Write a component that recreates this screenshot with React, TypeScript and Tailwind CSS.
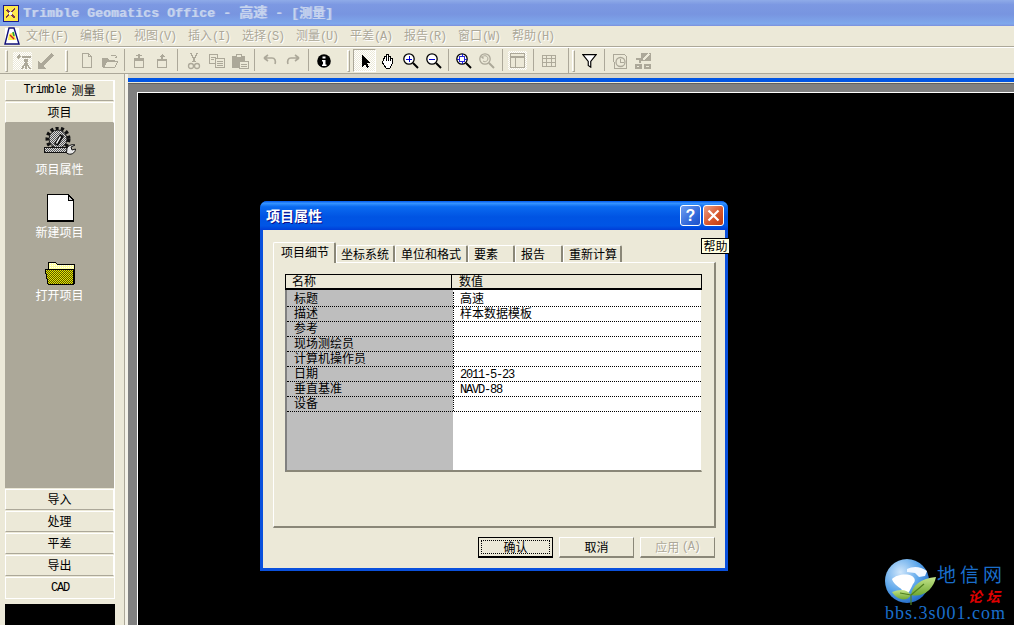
import React from "react";

const cjk = "font-['Noto_Sans_CJK_SC','Noto_Sans',sans-serif]";
const mono = "font-['Liberation_Mono','Noto_Sans_CJK_SC',monospace]";

function L({ children }: { children: React.ReactNode }) {
  return <span className={`${mono} text-[12px] tracking-[-1.2px]`}>{children}</span>;
}

function Btn({ children, active }: { children?: React.ReactNode; active?: boolean }) {
  return (
    <div
      className={`w-[23px] h-[23px] flex items-center justify-center shrink-0 ${
        active
          ? "border border-t-[#aca899] border-l-[#aca899] border-r-white border-b-white bg-[repeating-conic-gradient(#ffffff_0_25%,#ece9d8_0_50%)] bg-[length:2px_2px]"
          : ""
      }`}
    >
      {children}
    </div>
  );
}

function Sep({ w }: { w: string }) {
  return (
    <div className={`${w} h-[23px] flex justify-center shrink-0`}>
      <div className="w-[1px] h-[22px] bg-[#aca899]" />
    </div>
  );
}

function Grip() {
  return <div className="w-[3px] h-[22px] border-l border-t border-white border-r border-r-[#aca899] border-b border-b-[#aca899] shrink-0" />;
}

const G = "#aca899";

function Ico({ children, w = 18, h = 18 }: { children: React.ReactNode; w?: number; h?: number }) {
  return (
    <svg width={w} height={h} viewBox="0 0 18 18" fill="none" shapeRendering="crispEdges">
      {children}
    </svg>
  );
}

function Menu({ t, k }: { t: string; k: string }) {
  return (
    <div className={`w-[54px] shrink-0 text-[12px] text-[#aca899] whitespace-nowrap ${cjk} [text-shadow:1px_1px_0_#ffffff]`}>
      {t}
      <L>({k})</L>
    </div>
  );
}

function SideBtn({ children }: { children: React.ReactNode }) {
  return (
    <div className={`h-[21px] mb-[1px] pb-[1px] flex items-center justify-center border border-white border-b-[#aca899] border-t-white bg-[#ece9d8] text-[12px] text-black ${cjk}`}>
      {children}
    </div>
  );
}

function SideItem({ icon, label, h }: { icon: React.ReactNode; label: string; h: string }) {
  return (
    <div className={`${h} flex flex-col items-center justify-end`}>
      {icon}
      <div className={`text-[12px] leading-[14px] mt-[3px] text-white ${cjk}`}>{label}</div>
    </div>
  );
}

function Tab({ cls, label, active }: { cls: string; label: string; active?: boolean }) {
  return (
    <div
      className={`${cls} ${
        active ? "h-[21px] mb-[-1px] z-10 pb-[3px]" : "h-[17px] pb-[1px]"
      } bg-[#ece9d8] flex items-center text-[12px] text-black border-t border-l border-white border-r-2 border-r-[#8a8778] rounded-t-[2px] ${cjk}`}
    >
      {label}
    </div>
  );
}

const rows: [string, React.ReactNode][] = [
  ["标题", "高速"],
  ["描述", "样本数据模板"],
  ["参考", ""],
  ["现场测绘员", ""],
  ["计算机操作员", ""],
  ["日期", <L key="d">2011-5-23</L>],
  ["垂直基准", <L key="n">NAVD-88</L>],
  ["设备", ""],
];

function Row({ a, b }: { a: string; b: React.ReactNode }) {
  return (
    <div className="h-[15px] flex border-b border-dotted border-black text-[12px] leading-[12px] text-black">
      <div className="w-[166px] pl-[7px] shrink-0 whitespace-nowrap">{a}</div>
      <div className="flex-1 pl-[6px] border-l border-dotted border-black whitespace-nowrap">{b}</div>
    </div>
  );
}

function DlgBtn({ children, kind }: { children: React.ReactNode; kind?: "default" | "disabled" }) {
  if (kind === "default") {
    return (
      <div className="w-[75px] h-[21px] border border-black border-b-2 bg-[#ece9d8] p-[2px]">
        <div className="h-full border border-dotted border-black flex items-center justify-center text-[12px] text-black">
          {children}
        </div>
      </div>
    );
  }
  return (
    <div
      className={`w-[75px] h-[21px] flex items-center justify-center text-[12px] bg-[#ece9d8] border border-white border-r-[#8a8778] border-b-2 border-b-[#8a8778] ${
        kind === "disabled" ? "text-[#aca899] [text-shadow:1px_1px_0_#ffffff]" : "text-black"
      }`}
    >
      {children}
    </div>
  );
}

export default function App() {
  return (
    <div className="relative w-[1014px] h-[625px] overflow-hidden bg-[#ece9d8] flex flex-col">
      {/* App title bar */}
      <div className="h-[26px] shrink-0 flex items-center pl-[3px] bg-[linear-gradient(180deg,#8fabe8_0%,#7c98e2_18%,#7895e0_55%,#7fa8ec_92%,#7c8fdc_100%)]">
        <svg width="16" height="17" viewBox="0 0 16 17" shapeRendering="crispEdges">
          <rect x="0.5" y="0.5" width="15" height="16" fill="#ffe94a" stroke="#1a1a8c" />
          <path d="M3 12L12 4M4 5l8 8" stroke="#7a3a50" strokeWidth="1.5" />
          <rect x="6" y="7" width="3" height="3" fill="#f2f2f2" />
        </svg>
        <div className={`ml-[4px] pb-[2px] ${mono} font-bold text-[13px] tracking-[0.2px] text-[#c6d3ee] whitespace-pre [text-shadow:1px_0_0_#a9bce8]`}>
          Trimble Geomatics Office - <span className={`${cjk} text-[14px] tracking-[0px]`}>高速</span> - [<span className={`${cjk} text-[13px] tracking-[0px]`}>测量</span>]
        </div>
      </div>

      {/* Menu bar */}
      <div className="h-[20px] shrink-0 flex items-center border-b-0">
        <div className="w-[26px] pl-[4px] shrink-0">
          <svg width="16" height="18" viewBox="0 0 16 18">
            <rect x="1" y="1" width="14" height="16" fill="#ffffff" />
            <path d="M1 17L5 1h5l5 16z" fill="#fff" stroke="#10107a" strokeWidth="1.4" />
            <path d="M5 7l5-2 2 8H4z" fill="#ffe94a" />
            <path d="M6 8l4 4" stroke="#d02020" strokeWidth="1.5" />
            <path d="M9 5l1 4" stroke="#20a040" strokeWidth="1.5" />
          </svg>
        </div>
        <Menu t="文件" k="F" />
        <Menu t="编辑" k="E" />
        <Menu t="视图" k="V" />
        <Menu t="插入" k="I" />
        <Menu t="选择" k="S" />
        <Menu t="测量" k="U" />
        <Menu t="平差" k="A" />
        <Menu t="报告" k="R" />
        <Menu t="窗口" k="W" />
        <Menu t="帮助" k="H" />
      </div>
      <div className="h-[1px] shrink-0 bg-[#aca899]" />
      <div className="h-[1px] shrink-0 bg-white" />

      {/* Toolbar */}
      <div className="h-[26px] shrink-0 flex items-center pl-[5px] border-b border-[#aca899]">
        <Grip />
        <div className="w-[3px] shrink-0" />
        <Btn>
          <div className="w-[19px] h-[18px] flex items-center justify-center bg-[repeating-conic-gradient(#ffffff_0_25%,#ece9d8_0_50%)] bg-[length:2px_2px]">
            <Ico>
              <path d="M2 5l4-3 1 3-3 2zM8 4h9v2H8zM10 7h4v3h-4z" fill={G} />
              <path d="M12 10L8 17M12 10v7M12 10l4 7" stroke={G} strokeWidth="1.6" />
            </Ico>
          </div>
        </Btn>
        <Btn>
          <Ico>
            <path d="M1 9v8h8l-3-3L17 4l-3-3L4 12z" fill={G} />
          </Ico>
        </Btn>
        <div className="w-[8px] shrink-0" />
        <Grip />
        <div className="w-[7px] shrink-0" />
        <Btn>
          <Ico>
            <path d="M4.5 1.5h6l3 3v11h-9z" stroke={G} fill="#ece9d8" />
            <path d="M10.5 1.5v3h3" stroke={G} />
          </Ico>
        </Btn>
        <Btn>
          <Ico>
            <path d="M1 15V6h6l1 2h6v7z" fill={G} />
            <path d="M3 15l3-6h11l-3 6z" fill="#ece9d8" stroke={G} />
            <path d="M10 3h4l2 2-2 1" stroke={G} />
          </Ico>
        </Btn>
        <Sep w="w-[6px]" />
        <Btn>
          <Ico>
            <path d="M4.5 6.5h9v9h-9z" stroke={G} />
            <path d="M5 6h8v3H5zM8 2h2v4H8zM6 3h6v1H6z" fill={G} />
          </Ico>
        </Btn>
        <Btn>
          <Ico>
            <path d="M4.5 7.5h9v8h-9z" stroke={G} />
            <path d="M9 2l3 3H6zM8 5h2v3H8zM5 7h8v2H5z" fill={G} />
          </Ico>
        </Btn>
        <Sep w="w-[9px]" />
        <Btn>
          <Ico>
            <path d="M6 1l4 9M12 1L8 10" stroke={G} strokeWidth="1.4" />
            <circle cx="6" cy="14" r="2.5" stroke={G} strokeWidth="1.3" shapeRendering="auto" />
            <circle cx="12" cy="14" r="2.5" stroke={G} strokeWidth="1.3" shapeRendering="auto" />
          </Ico>
        </Btn>
        <Btn>
          <Ico>
            <path d="M1.5 2.5h8v9h-8z" stroke={G} />
            <path d="M7.5 6.5h9v9h-9z" stroke={G} fill="#ece9d8" />
            <path d="M3 5h5M3 7h3M9 9h6M9 11h6M9 13h6" stroke={G} />
          </Ico>
        </Btn>
        <Btn>
          <Ico>
            <path d="M1 4h13v12H1z" fill={G} />
            <path d="M5 2h5v3H5z" fill="#ece9d8" stroke={G} />
            <path d="M8.5 9.5h9v7h-9z" fill="#ece9d8" stroke={G} />
            <path d="M10 12h6M10 14h6" stroke={G} />
          </Ico>
        </Btn>
        <Sep w="w-[7px]" />
        <Btn>
          <Ico>
            <path d="M3 6h8c3 0 4 3 3 6M3 6l4-3M3 6l4 3" stroke={G} strokeWidth="1.6" shapeRendering="auto" />
          </Ico>
        </Btn>
        <Btn>
          <Ico>
            <path d="M15 6H7c-3 0-4 3-3 6M15 6l-4-3M15 6l-4 3" stroke={G} strokeWidth="1.6" shapeRendering="auto" />
          </Ico>
        </Btn>
        <Sep w="w-[8px]" />
        <Btn>
          <svg width="14" height="14" viewBox="0 0 14 14">
            <circle cx="7" cy="7" r="6.8" fill="#000" />
            <path d="M5.5 2.5h3v2h-3zM5 6h3.5v4.5h1V12H5v-1.5h1V7.500H5z" fill="#fff" />
          </svg>
        </Btn>
        <div className="w-[12px] shrink-0" />
        <Grip />
        <div className="w-[3px] shrink-0" />
        <Btn active>
          <Ico>
            <path d="M6 3v12l3-3 2 4 2-1-2-4h4z" fill="#000" />
          </Ico>
        </Btn>
        <Btn>
          <Ico>
            <path d="M4 9V6h1.500v-2h2V2.500h2V4h2v2h1.500v6l-2 4H7L3 10z" fill="#fff" stroke="#000" />
            <path d="M7.500 4v5M9.500 3v6M11.500 5v4" stroke="#000" />
          </Ico>
        </Btn>
        <Btn>
          <Ico>
            <circle cx="7" cy="7" r="5.200" fill="#fff" stroke="#000" strokeWidth="1.300" shapeRendering="auto" />
            <path d="M4 6.500h6v1H4zM6.500 4h1v6h-1z" fill="#0000d0" />
            <path d="M11 11l5 5" stroke="#000" strokeWidth="2" shapeRendering="auto" />
          </Ico>
        </Btn>
        <Btn>
          <Ico>
            <circle cx="7" cy="7" r="5.200" fill="#fff" stroke="#000" strokeWidth="1.300" shapeRendering="auto" />
            <path d="M4 6.500h6v1H4z" fill="#0000d0" />
            <path d="M11 11l5 5" stroke="#000" strokeWidth="2" shapeRendering="auto" />
          </Ico>
        </Btn>
        <Sep w="w-[7px]" />
        <Btn>
          <Ico>
            <circle cx="7" cy="7" r="5.200" fill="#fff" stroke="#000" strokeWidth="1.300" shapeRendering="auto" />
            <path d="M2 6.500h10v1H2zM6.500 2h1v10h-1zM4 4h6v6H4z" fill="#0000d0" opacity="0.85" />
            <path d="M5 5h4v4H5z" fill="#fff" />
            <path d="M11 11l5 5" stroke="#000" strokeWidth="2" shapeRendering="auto" />
          </Ico>
        </Btn>
        <Btn>
          <Ico>
            <circle cx="7" cy="7" r="5.200" fill="#ece9d8" stroke={G} strokeWidth="1.300" shapeRendering="auto" />
            <path d="M4 6a3 3 0 1 1 1 3M4 4v2h2" stroke={G} shapeRendering="auto" />
            <path d="M11 11l5 5" stroke={G} strokeWidth="2" shapeRendering="auto" />
          </Ico>
        </Btn>
        <Sep w="w-[8px]" />
        <Btn>
          <div className="w-[19px] h-[19px] flex items-center justify-center bg-[repeating-conic-gradient(#ffffff_0_25%,#ece9d8_0_50%)] bg-[length:2px_2px]">
            <Ico w={15} h={15}>
              <path d="M1 1h16v16H1z" fill="#ece9d8" stroke={G} strokeWidth="1.500" />
              <path d="M1 5h16" stroke={G} strokeWidth="2" />
              <path d="M7 5v12" stroke={G} strokeWidth="1.500" />
            </Ico>
          </div>
        </Btn>
        <Sep w="w-[8px]" />
        <Btn>
          <Ico w={16} h={16}>
            <path d="M1.500 2.500h15v13h-15zM1.500 6.500h15M1.500 11h15M6.500 2.500v13M11.500 2.500v13" stroke={G} strokeWidth="1.100" />
          </Ico>
        </Btn>
        <div className="w-[8px] shrink-0" />
        <div className="w-[1px] h-[25px] bg-[#aca899] shrink-0" />
        <div className="w-[3px] shrink-0" />
        <Grip />
        <div className="w-[3px] shrink-0" />
        <Btn>
          <Ico w={15} h={15}>
            <path d="M1 2h16l-6.500 8v7l-3-2v-5z" fill="#fff" stroke="#000" strokeWidth="1.400" shapeRendering="auto" />
          </Ico>
        </Btn>
        <Sep w="w-[7px]" />
        <Btn>
          <Ico>
            <path d="M2.500 2.500h11l2 2v12h-12z" fill="#ece9d8" stroke={G} />
            <circle cx="9.500" cy="10" r="4.500" stroke={G} strokeWidth="1.300" shapeRendering="auto" />
            <path d="M9.500 7v3h3" stroke={G} />
          </Ico>
        </Btn>
        <Btn>
          <Ico>
            <path d="M1 12h7v5H1zM10 12h7v5h-7z" fill={G} />
            <path d="M3 14h2v1H3zM12 14h3v1h-3z" fill="#ece9d8" />
            <path d="M7 1h10v8H7z" fill={G} />
            <path d="M9 8l6-6" stroke="#ece9d8" strokeWidth="1.500" />
            <path d="M2 7h4v4" stroke={G} strokeWidth="1.500" />
          </Ico>
        </Btn>
      </div>

      {/* Body */}
      <div className="flex-1 min-h-0 flex">
        {/* Left panel */}
        <div className="w-[124px] shrink-0 pl-[5px] pt-[6px] pr-[9px] flex flex-col">
          <div className="border-r border-b border-white flex flex-col h-[519px]">
            <SideBtn>
              <L>Trimble</L>
              <span className="ml-[6px]">测量</span>
            </SideBtn>
            <SideBtn>项目</SideBtn>
            <div className="flex-1 bg-[#aca899] flex flex-col -mt-[1px]">
              <SideItem
                h="h-[53px]"
                label="项目属性"
                icon={
                  <svg width="33" height="32" viewBox="0 0 33 32">
                    <defs>
                      <pattern id="dg" width="2" height="2" patternUnits="userSpaceOnUse">
                        <rect width="2" height="2" fill="#dcdcdc" />
                        <rect width="1" height="1" fill="#555" />
                        <rect x="1" y="1" width="1" height="1" fill="#555" />
                      </pattern>
                    </defs>
                    <circle cx="15" cy="12" r="10.500" fill="none" stroke="#111" strokeWidth="4" strokeDasharray="3 2.200" />
                    <circle cx="15" cy="12" r="9" fill="url(#dg)" stroke="#222" />
                    <path d="M11 17l6-10 4 2-6 10z" fill="#111" />
                    <path d="M13 16l4-7 1 1-4 7z" fill="#fff" />
                    <rect x="1.500" y="20.500" width="23" height="5" fill="url(#dg)" stroke="#111" />
                    <path d="M24 21c2-3 6-4 8-3l-4 2 1 3 3.500-1c0 4-5 7-9 4z" fill="#e8e8e8" stroke="#111" />
                  </svg>
                }
              />
              <SideItem
                h="h-[63px]"
                label="新建项目"
                icon={
                  <svg width="28" height="29" viewBox="0 0 28 29" shapeRendering="crispEdges">
                    <path d="M1 1h21l5 5v22H1z" fill="#fff" stroke="#000" />
                    <path d="M22 1v6h5z" fill="#c8c8c8" stroke="#000" />
                    <path d="M2 28h26" stroke="#000" strokeWidth="2" />
                  </svg>
                }
              />
              <SideItem
                h="h-[63px]"
                label="打开项目"
                icon={
                  <svg width="32" height="24" viewBox="0 0 32 24" shapeRendering="crispEdges">
                    <defs>
                      <pattern id="y1" width="2" height="2" patternUnits="userSpaceOnUse">
                        <rect width="2" height="2" fill="#e8e800" />
                        <rect width="1" height="1" fill="#555500" />
                        <rect x="1" y="1" width="1" height="1" fill="#555500" />
                      </pattern>
                      <pattern id="y2" width="2" height="2" patternUnits="userSpaceOnUse">
                        <rect width="2" height="2" fill="#ffffa0" />
                        <rect width="1" height="1" fill="#fff" />
                      </pattern>
                    </defs>
                    <path d="M4 4V1h7l2 2h17v19H4z" fill="url(#y2)" stroke="#000" />
                    <path d="M1 8h26l2 0v15H4z" fill="url(#y1)" stroke="#000" />
                  </svg>
                }
              />
              <div className="flex-1" />
            </div>
            <div className="h-[1px]" />
            <SideBtn>导入</SideBtn>
            <SideBtn>处理</SideBtn>
            <SideBtn>平差</SideBtn>
            <SideBtn>导出</SideBtn>
            <div className={`h-[21px] pb-[1px] flex items-center justify-center border-t border-l border-white bg-[#ece9d8] text-black`}>
              <L>CAD</L>
            </div>
          </div>
          <div className="h-[5px] shrink-0" />
          <div className="flex-1 bg-black" />
        </div>

        {/* Splitter */}
        <div className="w-[1px] shrink-0 bg-[#aca899]" />
        <div className="w-[3px] shrink-0 bg-[#f4f2e8]" />

        {/* MDI area */}
        <div className="flex-1 flex flex-col min-w-0">
          <div className="h-[4px] shrink-0 bg-[#d8d5c8]" />
          <div className="h-[4px] shrink-0 bg-[#0054e3]" />
          <div className="h-[1px] shrink-0 bg-[#ece9d8]" />
          <div className="h-[1px] shrink-0 bg-[#606060]" />
          <div className="flex-1 bg-[#808080] pt-[8px] pl-[9px] flex flex-col min-h-0">
            <div className="flex-1 bg-black border-t border-l border-white" />
          </div>
        </div>
      </div>

      {/* Dialog window */}
      <div className={`absolute left-[260px] top-[201px] w-[468px] h-[370px] rounded-t-[7px] overflow-hidden flex flex-col bg-[#0a50dc] ${cjk}`}>
        <div className="h-[29px] shrink-0 flex items-center pl-[6px] pr-[4px] bg-[linear-gradient(180deg,#0058ee_0%,#3593ff_8%,#0a6af0_20%,#0054e3_55%,#0055e5_85%,#003dd7_100%)]">
          <div className="flex-1 text-[14px] font-bold text-white [text-shadow:1px_1px_0_#0f1089]">项目属性</div>
          <div className="w-[21px] h-[21px] rounded-[3px] border border-white flex items-center justify-center bg-[linear-gradient(135deg,#6f9ef0,#2a62d8_70%,#2050c8)] text-white font-bold text-[16px] font-['Liberation_Sans',sans-serif]">
            ?
          </div>
          <div className="w-[21px] h-[21px] ml-[2px] rounded-[3px] border border-white flex items-center justify-center bg-[linear-gradient(135deg,#e8a088,#d8582e_55%,#c03a10)]">
            <svg width="13" height="13" viewBox="0 0 13 13">
              <path d="M1.500 1.500l10 10M11.500 1.500l-10 10" stroke="#fff" strokeWidth="2.200" />
            </svg>
          </div>
        </div>
        <div className="flex-1 mx-[3px] mb-[3px] bg-[#ece9d8] flex flex-col pl-[10px] pr-[9px]">
          <div className="h-[32px] shrink-0 flex items-end">
            <Tab cls="w-[63px] pl-[7px]" label="项目细节" active />
            <Tab cls="w-[59px] pl-[4px]" label="坐标系统" />
            <Tab cls="w-[73px] pl-[5px]" label="单位和格式" />
            <Tab cls="w-[47px] pl-[5px]" label="要素" />
            <Tab cls="w-[48px] pl-[5px]" label="报告" />
            <Tab cls="w-[59px] pl-[5px]" label="重新计算" />
          </div>
          <div className="h-[266px] shrink-0 border-t border-l border-white border-r-2 border-r-[#8a8778] border-b-2 border-b-[#8a8778] pt-[11px] pl-[11px] pr-[12px]">
            <div className="h-[198px] flex flex-col">
              <div className="h-[16px] shrink-0 flex border border-black border-b-2 text-[12px] leading-[12px] text-black bg-[#ece9d8]">
                <div className="w-[166px] pl-[6px] border-r border-black shrink-0">名称</div>
                <div className="pl-[7px]">数值</div>
              </div>
              <div className="flex-1 border-l-2 border-l-[#808080] border-r border-r-[#ece9d8] border-b-2 border-b-[#8a8778] pt-[2px] bg-[linear-gradient(90deg,#bebebe_166px,#ffffff_166px)]">
                {rows.map(([a, b]) => (
                  <Row key={a} a={a} b={b} />
                ))}
              </div>
            </div>
          </div>
          <div className="flex-1 flex justify-end items-start pt-[9px] gap-[6px] pr-[1px]">
            <DlgBtn kind="default">确认</DlgBtn>
            <DlgBtn>取消</DlgBtn>
            <DlgBtn kind="disabled">
              应用&nbsp;<L>(A)</L>
            </DlgBtn>
          </div>
        </div>
      </div>

      {/* Tooltip */}
      <div className={`absolute left-[701px] top-[238px] w-[29px] h-[16px] border border-black bg-[#ffffe1] flex items-center justify-center text-[12px] text-black ${cjk}`}>
        帮助
      </div>

      {/* Watermark logo */}
      <div className="absolute left-[885px] top-[557px] w-[125px] h-[66px]">
        <svg width="58" height="52" viewBox="0 0 58 52" className="absolute left-0 top-0">
          <defs>
            <radialGradient id="gl" cx="0.35" cy="0.3" r="0.8">
              <stop offset="0" stopColor="#cfe6fb" />
              <stop offset="0.55" stopColor="#5aa5ea" />
              <stop offset="1" stopColor="#1a5fc0" />
            </radialGradient>
            <linearGradient id="lf" x1="0" y1="0" x2="0" y2="1">
              <stop offset="0" stopColor="#c4e48a" />
              <stop offset="1" stopColor="#6fa832" />
            </linearGradient>
          </defs>
          <circle cx="22" cy="24" r="22" fill="url(#gl)" />
          <path d="M7 22c4-4 14-6 20-3 3 2 4 5 1 8-2 5-5 9-7 13-3-3-3-7-6-9-3-2-7-5-8-9z" fill="#ffffff" />
          <path d="M22 12c6-3 13-3 20 2l-2 5-6 1-4-4-8-1z" fill="#f2f8ff" />
          <path d="M26 38c1-9 10-17 25-18-2 11-12 21-25 18z" fill="url(#lf)" />
          <path d="M26 38C22 32 15 32 7 35c4 7 14 11 19 3z" fill="url(#lf)" />
          <path d="M26 38l13-11M26 38l-11-2M26 38v10" stroke="#4f7f20" strokeWidth="1.200" />
        </svg>
        <div className={`absolute left-[52px] top-[6px] text-[19px] leading-[22px] tracking-[4px] text-[#1a6ecb] whitespace-nowrap ${cjk}`}>地信网</div>
        <div className={`absolute left-[83px] top-[32px] text-[14px] leading-[14px] tracking-[4px] italic font-bold text-[#e00000] whitespace-nowrap ${cjk}`}>论坛</div>
        <div className="absolute left-0 top-[47px] font-['Liberation_Serif',serif] text-[18px] leading-[18px] tracking-[1px] text-[#1a6ecb] whitespace-nowrap">bbs.3s001.com</div>
      </div>
    </div>
  );
}
